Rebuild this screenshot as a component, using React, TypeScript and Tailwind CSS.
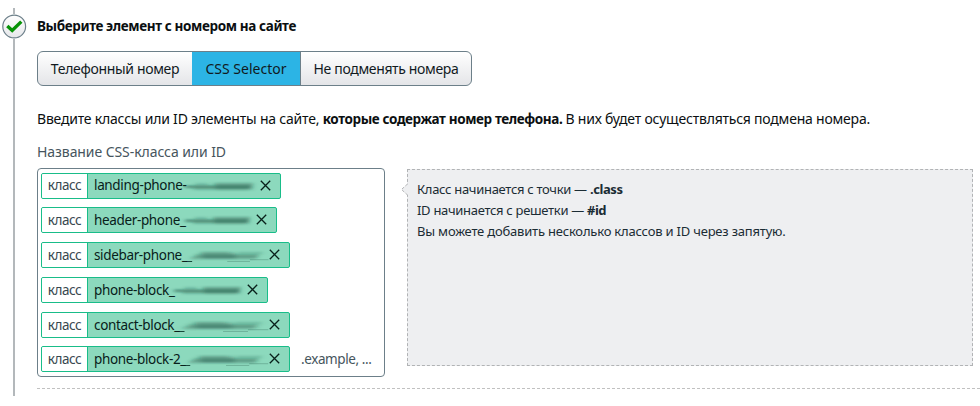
import clsx from 'clsx';

type Chip = {
    name: string;
    width: string;
    mask: 'plain' | 'tail';
};

const chips: Chip[] = [
    { name: 'landing-phone-', width: 'w-[240px]', mask: 'plain' },
    { name: 'header-phone_', width: 'w-[236px]', mask: 'plain' },
    { name: 'sidebar-phone_', width: 'w-[249px]', mask: 'tail' },
    { name: 'phone-block_', width: 'w-[227px]', mask: 'plain' },
    { name: 'contact-block_', width: 'w-[249px]', mask: 'tail' },
    { name: 'phone-block-2_', width: 'w-[249px]', mask: 'tail' },
];

const Smudge = ({ mask }: { mask: Chip['mask'] }) => (
    <svg
        className="h-5 w-full overflow-visible"
        viewBox="0 0 76 20"
        preserveAspectRatio="none"
        fill="none"
        stroke="#17493a"
    >
        <defs>
            <filter id="smudge" filterUnits="userSpaceOnUse" x="-10" y="0" width="100" height="20">
                <feGaussianBlur stdDeviation="2.6 0.8" />
            </filter>
        </defs>
        {mask === 'plain' ? (
            <g filter="url(#smudge)">
                <path d="M-1 10.7H70" strokeWidth="2" opacity=".65" />
                <path d="M10 8.3H24M29 8H72" strokeWidth="1.5" opacity=".3" />
                <path d="M8 12.8H68" strokeWidth="1.8" opacity=".3" />
                <path d="M32 10.5H72" strokeWidth="6.5" opacity=".25" />
            </g>
        ) : (
            <>
                <g filter="url(#smudge)">
                    <path d="M7 10.7H68" strokeWidth="2" opacity=".5" />
                    <path d="M11 8H40M48 8H72" strokeWidth="1.5" opacity=".3" />
                    <path d="M3 13H66" strokeWidth="2" opacity=".35" />
                    <path d="M14 10.5H46" strokeWidth="6.5" opacity=".25" />
                </g>
                <path d="M38 16.5H60M60 14.7H78" strokeWidth=".8" opacity=".3" />
                <path d="M0 16.5H4" strokeWidth="1" />
            </>
        )}
    </svg>
);

const ClassChip = ({ name, width, mask }: Chip) => (
    <div
        className={clsx(
            'flex h-[26px] shrink-0 rounded-[2px] border border-[#19bd89] bg-[#8cd9bd]',
            width,
        )}
    >
        <div className="flex w-[46px] shrink-0 items-center justify-center rounded-l-[1px] border-r border-[#19bd89] bg-white tracking-[-0.5px] text-[#38474f]">
            класс
        </div>
        <div className="flex min-w-0 grow items-center pl-[6px] pr-[9px]">
            <span className="tracking-[-0.35px] whitespace-nowrap text-[#08201a]">{name}</span>
            <div className="min-w-0 grow">
                <Smudge mask={mask} />
            </div>
            <svg
                className="mb-px ml-[3px] size-[11px] shrink-0"
                viewBox="0 0 11 11"
                stroke="#08201a"
                strokeWidth="1.3"
            >
                <path d="M.8.8l9.4 9.4M10.2.8L.8 10.2" />
            </svg>
        </div>
    </div>
);

const ModeSwitch = () => (
    <div className="mt-[15px] flex h-[35px] w-[435px] overflow-hidden rounded-[6px] border border-[#6c7f89] bg-linear-to-b from-white to-[#e4e5e8] text-[14px] text-[#111a1e]">
        <div className="flex w-[154px] items-center justify-center tracking-[-0.33px] whitespace-nowrap">
            Телефонный номер
        </div>
        <div className="-my-px flex w-[108px] items-center justify-center border-y border-t-[#2789ae] border-b-[#38a5cd] bg-[#2cb4e5] whitespace-nowrap">
            CSS Selector
        </div>
        <div className="flex grow items-center justify-center border-l border-[#6c7f89] tracking-[-0.35px] whitespace-nowrap">
            Не подменять номера
        </div>
    </div>
);

const Hint = () => (
    <div className="relative mt-px h-[197px] w-[566px] border border-dashed border-[#b1b3b5] bg-[#eeeff1] pt-[9px] pl-[9px] text-[13px] leading-[20.8px] tracking-[-0.3px] whitespace-nowrap text-[#1b2c34]">
        <svg className="absolute top-[12px] -left-[8px] h-[16px] w-[9px]" viewBox="0 0 9 16">
            <path d="M9 1L1.5 7.5L9 14Z" fill="#eeeff1" />
            <path d="M7.5 2L1.5 7.5L7.5 13" fill="none" stroke="#b1b3b5" strokeDasharray="3 1.5" />
        </svg>
        <p>
            Класс начинается с точки — <b className="tracking-[-0.4px]">.class</b>
        </p>
        <p>
            ID начинается с решетки — <b className="tracking-[-0.5px]">#id</b>
        </p>
        <p className="tracking-[-0.2px]">Вы можете добавить несколько классов и ID через запятую.</p>
    </div>
);

const App = () => (
    <main className="flex h-[406px] w-[980px] overflow-hidden bg-white font-['Noto_Sans',sans-serif] text-[13.5px] text-[#0b0f11]">
        <aside className="flex w-[37px] shrink-0 flex-col pt-2">
            <div className="ml-[13px] h-[6px] w-[2px] bg-[#b3b8bb]" />
            <svg className="ml-[2px] size-[25px] shrink-0" viewBox="0 0 25 25">
                <defs>
                    <linearGradient id="badge" x2="0" y2="1">
                        <stop stopColor="#fff" />
                        <stop offset="1" stopColor="#e6e7ea" />
                    </linearGradient>
                </defs>
                <circle cx="12.2" cy="12.5" r="11.4" fill="url(#badge)" stroke="#6c7f89" strokeWidth="1.2" />
                <path d="M5.3 12L10.2 16.4L19.3 7.6" fill="none" stroke="#079307" strokeWidth="3.4" />
            </svg>
            <div className="ml-[13px] h-[357px] w-[2px] bg-[#b3b8bb]" />
        </aside>

        <div className="w-[943px] shrink-0">
            <h2 className="mt-[17px] h-[19px] text-[13.5px] leading-[19px] font-bold tracking-[-0.38px] whitespace-nowrap">
                Выберите элемент с номером на сайте
            </h2>
            <ModeSwitch />
            <p className="mt-[23px] h-5 text-[14px] leading-5 whitespace-nowrap">
                <span className="tracking-[-0.21px]">Введите классы или ID элементы на сайте, </span>
                <b className="text-[13.5px] tracking-[-0.38px]">которые содержат номер телефона. </b>
                <span className="tracking-[-0.21px]">В них будет осуществляться подмена номера.</span>
            </p>
            <p className="mt-[13px] h-5 text-[14px] leading-5 tracking-[-0.07px] text-[#46555d]">
                Название CSS-класса или ID
            </p>
            <div className="mt-[6px] flex gap-[22px]">
                <div className="flex h-[209px] w-[348px] flex-col gap-[8.8px] rounded-[4px] border border-[#6c7f89] pt-[3.5px] pl-[3px]">
                    {chips.map((chip, i) => (
                        <div key={chip.name} className="flex items-center">
                            <ClassChip {...chip} />
                            {i === chips.length - 1 && (
                                <span className="ml-[11px] tracking-[-0.4px] whitespace-nowrap text-[#46555d]">
                                    .example, ...
                                </span>
                            )}
                        </div>
                    ))}
                </div>
                <Hint />
            </div>
            <div className="mt-[11px] border-t border-dashed border-[#c1c1c1]" />
        </div>
    </main>
);

export default App;
